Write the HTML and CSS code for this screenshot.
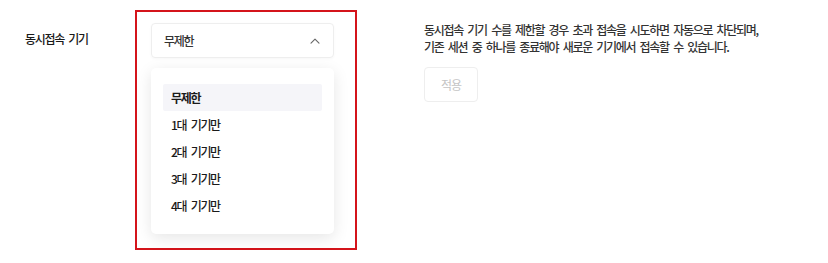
FILE: index.html
```html
<!DOCTYPE html>
<html lang="ko">
<head>
  <meta charset="UTF-8">
  <meta name="viewport" content="width=device-width, initial-scale=1.0">
  <title>동시접속 기기 설정</title>
  <link rel="stylesheet" href="styles.css">
</head>
<body>

  <main class="setting-row">
    <div class="setting-label">동시접속 기기</div>

    <div class="select-area">
      <div class="select-box">
        <span>무제한</span>
        <svg class="chevron" width="10" height="6" viewBox="0 0 10 6">
          <path d="M1 5.2 L5 1.2 L9 5.2" fill="none" stroke="#666" stroke-width="1.1" stroke-linecap="round" stroke-linejoin="round"/>
        </svg>
      </div>
      <ul class="option-list">
        <li class="option selecionado">무제한</li>
        <li class="option">1대 기기만</li>
        <li class="option">2대 기기만</li>
        <li class="option">3대 기기만</li>
        <li class="option">4대 기기만</li>
      </ul>
    </div>

    <div class="setting-desc">
      <p>동시접속 기기 수를 제한할 경우 초과 접속을 시도하면 자동으로 차단되며,<br>
      기존 세션 중 하나를 종료해야 새로운 기기에서 접속할 수 있습니다.</p>
      <button class="apply-button" disabled>적용</button>
    </div>
  </main>

</body>
</html>
```

FILE: styles.css
```css
:root {
  --texto: #1a1a1a;
  --texto-suave: #333;
  --borda: #eeeeee;
  --destaque: #d4141b;
}

body {
  margin: 0;
  background-color: #fff;
  color: var(--texto);
  font-family: "Noto Sans CJK KR", "Noto Sans", sans-serif;
  font-size: 12px;
  font-weight: 500;
  letter-spacing: -1.3px;
  word-spacing: 2.3px;
}

.setting-row {
  display: flex;
  align-items: flex-start;
  padding: 10px 0 0 25px;
}

.setting-label {
  width: 110px;
  padding-top: 20px;
  line-height: 18px;
}

/* caixa vermelha em volta do select */
.select-area {
  width: 183px;
  height: 225px;
  border: 2px solid var(--destaque);
  padding: 11px 21px 0 14px;
}

.select-box {
  display: flex;
  justify-content: space-between;
  align-items: center;
  height: 35px;
  box-sizing: border-box;
  padding: 0 13px 0 12px;
  border: 1px solid var(--borda);
  border-radius: 4px;
  box-shadow: 0 1px 3px rgba(0, 0, 0, 0.03);
  color: var(--texto-suave);
}

.chevron {
  display: block;
}

.option-list {
  list-style: none;
  margin: 10px 0 0;
  padding: 16px 12px 15px;
  background-color: #fff;
  border-radius: 5px;
  box-shadow: 0 4px 16px rgba(0, 0, 0, 0.10);
}

.option {
  height: 27px;
  line-height: 27px;
  padding: 0 8px;
  border-radius: 2px;
  color: var(--texto);
}

.option.selecionado {
  background-color: #f5f5f9;
  font-weight: bold;
}

.setting-desc {
  margin-left: 67px;
  padding-top: 11px;
}

.setting-desc p {
  margin: 0;
  line-height: 17px;
  color: var(--texto-suave);
}

.apply-button {
  display: block;
  margin-top: 12px;
  width: 54px;
  height: 35px;
  background-color: #fff;
  border: 1px solid var(--borda);
  border-radius: 4px;
  font-family: inherit;
  font-size: 12px;
  font-weight: 400;
  letter-spacing: -1px;
  color: #c4c4c4;
}
```
